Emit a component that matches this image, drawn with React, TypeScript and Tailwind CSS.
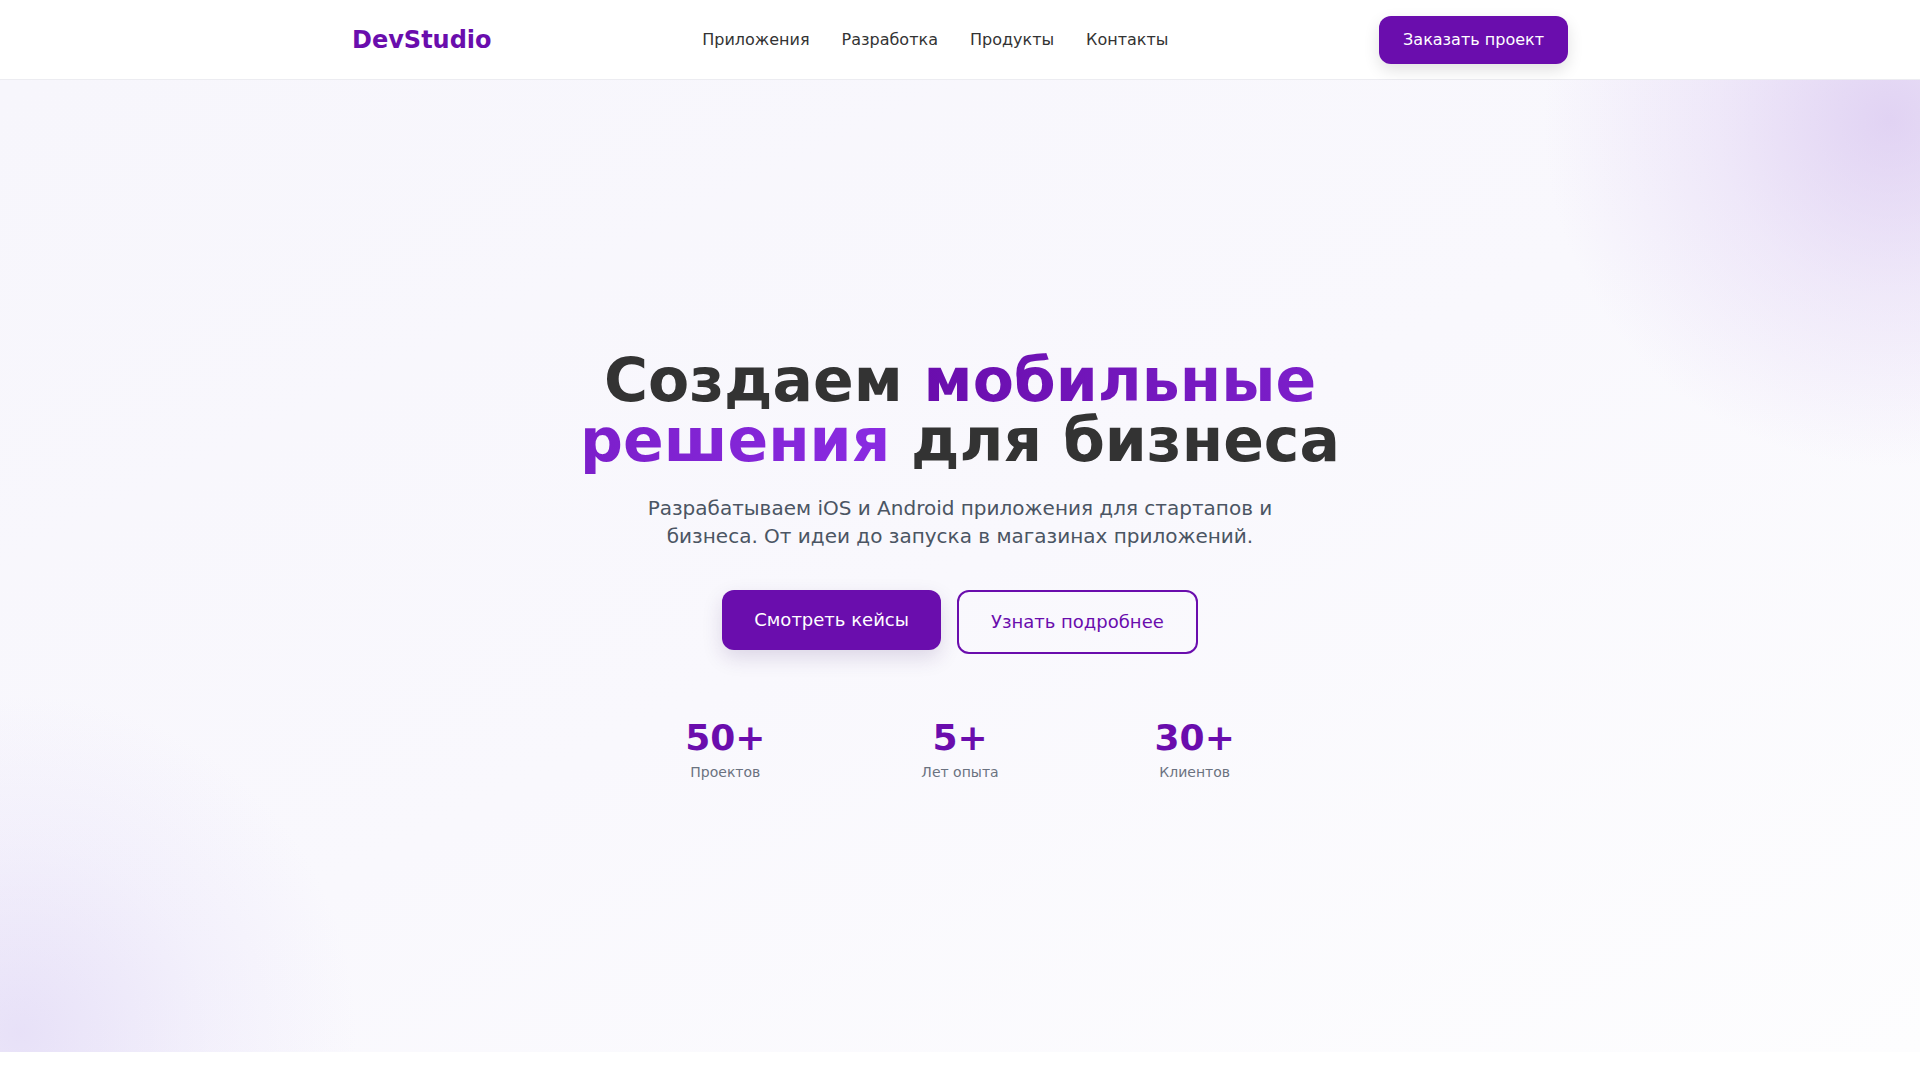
export default function App() {
  return (
    <div className="min-h-screen bg-white font-['DejaVu_Sans',sans-serif] text-[#333]">
      <header className="h-20 bg-white border-b border-[#ececf1]">
        <div className="max-w-7xl mx-auto h-full px-8 flex items-center justify-between">
          <a href="#" className="text-2xl font-bold text-[#6a0dad]">
            DevStudio
          </a>
          <nav className="flex items-center gap-8 text-base text-[#333]">
            <a href="#">Приложения</a>
            <a href="#">Разработка</a>
            <a href="#">Продукты</a>
            <a href="#">Контакты</a>
          </nav>
          <button className="h-12 px-6 rounded-xl bg-[#6a0dad] text-white text-base shadow-[0_6px_16px_rgba(0,0,0,0.12)]">
            Заказать проект
          </button>
        </div>
      </header>

      <section className="relative h-[90vh] overflow-hidden bg-gradient-to-br from-[#f7f6fc] via-[#f9f8fd] to-[#fdfdfe] flex items-center justify-center">
        {/* decorative blobs */}
        <div className="absolute -top-[310px] -right-[320px] w-[700px] h-[700px] rounded-full bg-[radial-gradient(circle,rgba(205,180,235,0.55)_0%,rgba(215,195,240,0.3)_35%,rgba(255,255,255,0)_70%)]" />
        <div className="absolute -bottom-[320px] -left-[320px] w-[680px] h-[680px] rounded-full bg-[radial-gradient(circle,rgba(205,190,240,0.4)_0%,rgba(215,205,245,0.18)_40%,rgba(255,255,255,0)_70%)]" />

        <div className="relative z-10 flex flex-col items-center text-center">
          <h1 className="text-6xl font-bold leading-none text-[#333] max-w-[780px]">
            Создаем{' '}
            <span className="bg-gradient-to-r from-[#6a0dad] to-[#8a2be2] bg-clip-text text-transparent">
              мобильные решения
            </span>{' '}
            для бизнеса
          </h1>
          <p className="mt-6 max-w-2xl text-xl leading-7 text-[#4b5563]">
            Разрабатываем iOS и Android приложения для стартапов и бизнеса. От идеи до запуска в магазинах приложений.
          </p>
          <div className="mt-10 flex items-start gap-4">
            <button className="px-8 py-4 rounded-xl bg-[#6a0dad] text-white text-lg leading-7 shadow-[0_8px_20px_rgba(60,30,100,0.15)]">
              Смотреть кейсы
            </button>
            <button className="px-8 py-4 rounded-xl border-2 border-[#6a0dad] text-[#6a0dad] text-lg leading-7 bg-transparent">
              Узнать подробнее
            </button>
          </div>
          <div className="mt-16 grid grid-cols-3 gap-8 w-[672px]">
            <div className="flex flex-col items-center">
              <div className="text-4xl font-bold text-[#6a0dad]">50+</div>
              <div className="mt-1 text-sm text-[#6b7280]">Проектов</div>
            </div>
            <div className="flex flex-col items-center">
              <div className="text-4xl font-bold text-[#6a0dad]">5+</div>
              <div className="mt-1 text-sm text-[#6b7280]">Лет опыта</div>
            </div>
            <div className="flex flex-col items-center">
              <div className="text-4xl font-bold text-[#6a0dad]">30+</div>
              <div className="mt-1 text-sm text-[#6b7280]">Клиентов</div>
            </div>
          </div>
        </div>
      </section>
    </div>
  )
}
